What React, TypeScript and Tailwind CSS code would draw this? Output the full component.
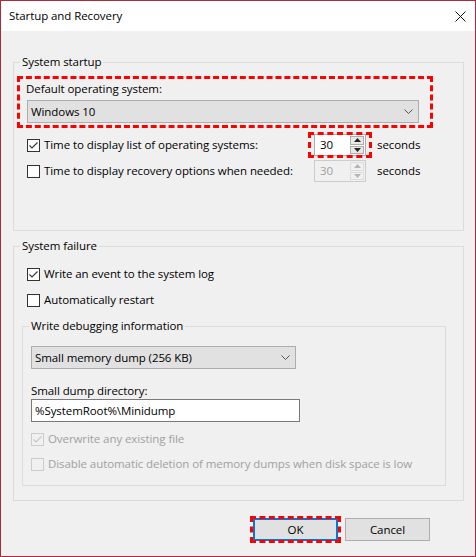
import React from 'react';

// checkbox square with optional tick
function Check({ checked, disabled }: { checked?: boolean; disabled?: boolean }) {
  return (
    <span
      className={`w-[13px] h-[13px] shrink-0 border flex items-center justify-center ${
        disabled ? 'border-[#cccccc] bg-[#f0f0f0]' : 'border-[#333333] bg-white'
      }`}
    >
      {checked && (
        <svg width="11" height="11" viewBox="0 0 11 11">
          <path
            d="M1.5 5.5 L4 8 L9.5 2.5"
            fill="none"
            stroke={disabled ? '#c6c6c6' : '#333333'}
            strokeWidth="1.1"
          />
        </svg>
      )}
    </span>
  );
}

function Chevron() {
  return (
    <svg width="9" height="5" viewBox="0 0 9 5">
      <path d="M0.5 0.5 L4.5 4.5 L8.5 0.5" fill="none" stroke="#555555" strokeWidth="1" />
    </svg>
  );
}

function Select({ value, width }: { value: string; width: string }) {
  return (
    <div
      className={`${width} h-[23px] border border-[#adadad] bg-[#e1e1e1] flex items-center justify-between pl-[3px] pr-[5px]`}
    >
      <span>{value}</span>
      <Chevron />
    </div>
  );
}

function Spinner({ disabled }: { disabled?: boolean }) {
  const tri = disabled ? '#b5b5b5' : '#222222';
  return (
    <div
      className={`w-[52px] h-[22px] border flex ${
        disabled ? 'border-[#cccccc] bg-[#f0f0f0] text-[#a0a0a0]' : 'border-[#abadb3] bg-white'
      }`}
    >
      <span className="flex-1 pl-[5px] leading-[20px]">30</span>
      <div className="w-[16px] flex flex-col gap-[1px] p-[1px]">
        <span
          className={`flex-1 flex items-center justify-center border ${
            disabled ? 'border-[#dddddd] bg-[#f0f0f0]' : 'border-[#adadad] bg-[#e8e8e8]'
          }`}
        >
          <svg width="7" height="4" viewBox="0 0 7 4">
            <path d="M0 4 L3.5 0 L7 4 Z" fill={tri} />
          </svg>
        </span>
        <span
          className={`flex-1 flex items-center justify-center border ${
            disabled ? 'border-[#dddddd] bg-[#f0f0f0]' : 'border-[#adadad] bg-[#e8e8e8]'
          }`}
        >
          <svg width="7" height="4" viewBox="0 0 7 4">
            <path d="M0 0 L3.5 4 L7 0 Z" fill={tri} />
          </svg>
        </span>
      </div>
    </div>
  );
}

function Legend({ children }: { children: React.ReactNode }) {
  return (
    <span className="block w-fit -mt-[9px] ml-[6px] px-[2px] bg-[#f0f0f0] leading-[16px]">
      {children}
    </span>
  );
}

export default function App() {
  return (
    <div className="w-[476px] h-[557px] border border-[#ad2a3a] bg-[#f0f0f0] flex flex-col text-[11.5px] tracking-[-0.08px] text-black font-['Segoe_UI','Open_Sans',sans-serif]">
      {/* title bar */}
      <div className="h-[30px] bg-white flex items-center justify-between pl-[8px] pr-[9px] shrink-0">
        <span>Startup and Recovery</span>
        <svg width="11" height="11" viewBox="0 0 11 11">
          <path d="M0.5 0.5 L10.5 10.5 M10.5 0.5 L0.5 10.5" stroke="#111111" strokeWidth="1" />
        </svg>
      </div>

      {/* System startup */}
      <div className="mt-[31px] ml-[12px] w-[451px] h-[169px] border border-[#dcdcdc] flex flex-col">
        <Legend>System startup</Legend>
        <div className="mt-[6px] ml-[3px] w-[416px] border-[3px] border-dashed border-[#ff0000] pl-[6px] pt-[2px] pb-[2px]">
          <div className="leading-[16px]">Default operating system:</div>
          <div className="mt-[3px] ml-[1px]">
            <Select value="Windows 10" width="w-[392px]" />
          </div>
        </div>

        <div className="mt-[6px] ml-[13px] h-[22px] flex items-center">
          <div className="w-[287px] flex items-center gap-[4px]">
            <Check checked />
            <span>Time to display list of operating systems:</span>
          </div>
          <div className="relative">
            <Spinner />
            <span className="absolute -left-[6px] -right-[6px] -top-[2px] -bottom-[2px] border-[3px] border-dashed border-[#ff0000]" />
          </div>
          <span className="ml-[11px]">seconds</span>
        </div>

        <div className="mt-[4px] ml-[13px] h-[22px] flex items-center">
          <div className="w-[287px] flex items-center gap-[4px]">
            <Check />
            <span>Time to display recovery options when needed:</span>
          </div>
          <Spinner disabled />
          <span className="ml-[11px]">seconds</span>
        </div>
      </div>

      {/* System failure */}
      <div className="mt-[15px] ml-[12px] w-[451px] h-[255px] border border-[#dcdcdc] flex flex-col">
        <Legend>System failure</Legend>
        <div className="mt-[11px] ml-[13px] h-[18px] flex items-center gap-[4px]">
          <Check checked />
          <span>Write an event to the system log</span>
        </div>
        <div className="mt-[8px] ml-[13px] h-[18px] flex items-center gap-[4px]">
          <Check />
          <span>Automatically restart</span>
        </div>

        <div className="mt-[17px] ml-[8px] w-[424px] h-[160px] border border-[#dcdcdc] flex flex-col">
          <Legend>Write debugging information</Legend>
          <div className="mt-[12px] ml-[8px]">
            <Select value="Small memory dump (256 KB)" width="w-[265px]" />
          </div>
          <div className="mt-[14px] ml-[8px] leading-[16px]">Small dump directory:</div>
          <div className="ml-[8px] w-[269px] h-[23px] border border-[#7a7a7a] bg-white pl-[3px] leading-[21px]">
            %SystemRoot%\Minidump
          </div>
          <div className="mt-[8px] ml-[8px] h-[18px] flex items-center gap-[4px] text-[#a0a0a0]">
            <Check checked disabled />
            <span>Overwrite any existing file</span>
          </div>
          <div className="mt-[7px] ml-[8px] h-[18px] flex items-center gap-[4px] text-[#a0a0a0]">
            <Check disabled />
            <span>Disable automatic deletion of memory dumps when disk space is low</span>
          </div>
        </div>
      </div>

      {/* buttons */}
      <div className="mt-[17px] mr-[45px] flex justify-end gap-[7px]">
        <div className="relative">
          <div className="w-[85px] h-[23px] border-2 border-[#0078d7] bg-[#e1e1e1] flex items-center justify-center">
            OK
          </div>
          <span className="absolute -left-[3px] -right-[3px] -top-[2px] -bottom-[2px] border-[3px] border-dashed border-[#ff0000]" />
        </div>
        <div className="w-[85px] h-[23px] border border-[#adadad] bg-[#e1e1e1] flex items-center justify-center">
          Cancel
        </div>
      </div>
    </div>
  );
}
